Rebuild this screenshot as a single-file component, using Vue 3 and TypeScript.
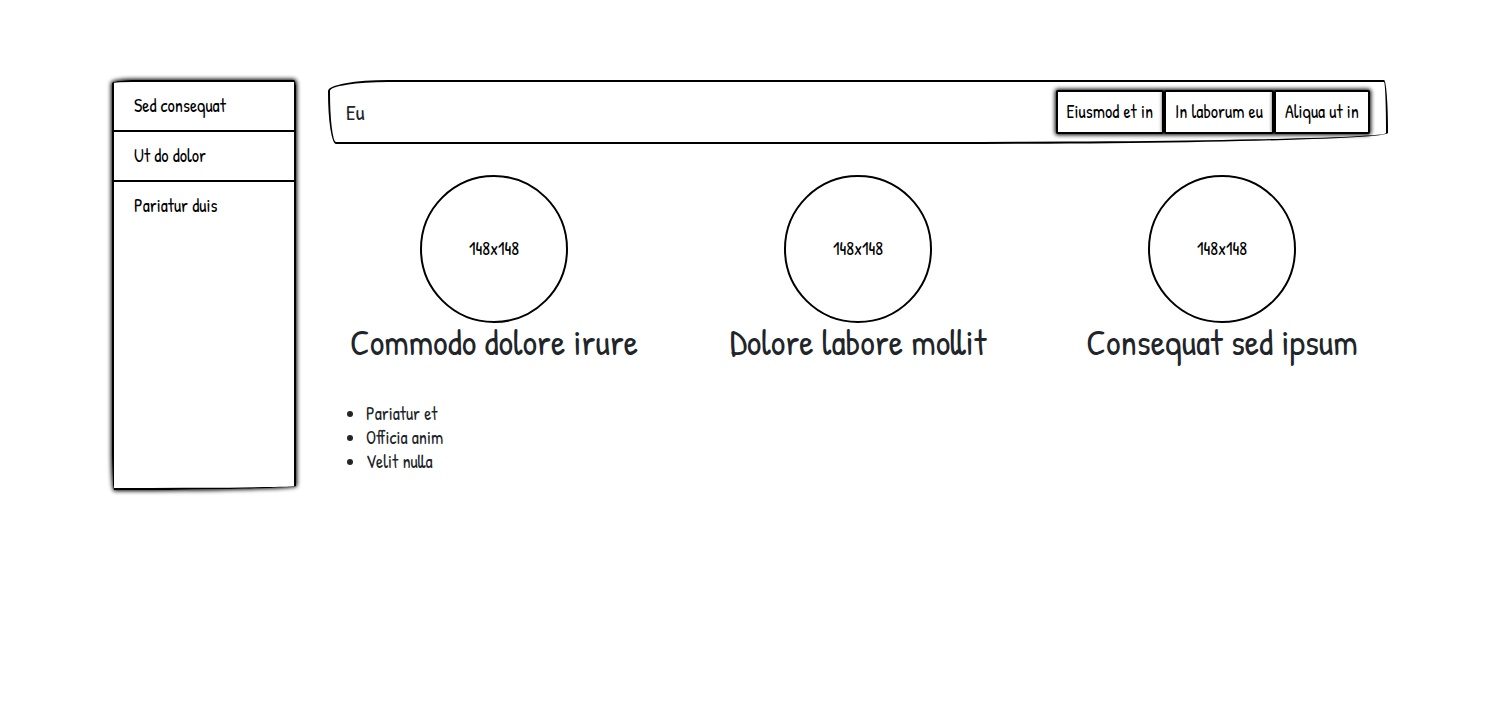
<script setup lang="ts">
const sections: string[] = ['Sed consequat', 'Ut do dolor', 'Pariatur duis']
const actions: string[] = ['Eiusmod et in', 'In laborum eu', 'Aliqua ut in']
const cards: string[] = ['Commodo dolore irure', 'Dolore labore mollit', 'Consequat sed ipsum']
const points: string[] = ['Pariatur et', 'Officia anim', 'Velit nulla']
</script>

<template>
  <div class="page">
    <aside class="sidebar">
      <a v-for="s in sections" :key="s" href="#" class="side-link">{{ s }}</a>
    </aside>
    <main class="main">
      <nav class="navbar">
        <a href="#" class="brand">Eu</a>
        <div class="actions">
          <button v-for="a in actions" :key="a" type="button">{{ a }}</button>
        </div>
      </nav>
      <section class="cards">
        <article v-for="c in cards" :key="c" class="card">
          <div class="circle">148x148</div>
          <h2>{{ c }}</h2>
        </article>
      </section>
      <ul class="points">
        <li v-for="p in points" :key="p">{{ p }}</li>
      </ul>
    </main>
  </div>
</template>

<style>
body {
  margin: 0;
  background: #fff;
}
</style>

<style scoped>
.page {
  display: grid;
  grid-template-columns: 184px 1fr;
  gap: 32px;
  padding: 80px 112px;
  font: 18px/24px "Patrick Hand", "Indie Flower", Lato, sans-serif;
  color: #212529;
}
.sidebar {
  display: flex;
  flex-direction: column;
  box-sizing: border-box;
  min-height: 410px;
  overflow: hidden;
  border: 2px solid #000;
  border-radius: 20px 2px 180px 2px / 3px 6px 4px 40px;
  box-shadow: 0 0 4px 1px #000;
}
.side-link {
  padding: 12px 20px;
  color: #000;
  text-decoration: none;
}
.side-link + .side-link {
  border-top: 2px solid #000;
}
.main {
  min-width: 0;
}
.navbar {
  display: flex;
  align-items: center;
  justify-content: space-between;
  padding: 8px 16px;
  border: 2px solid #000;
  border-radius: 60px 4px 450px 8px / 11px 52px 11px 52px;
}
.brand {
  font-size: 22px;
  color: #212529;
  text-decoration: none;
}
.actions {
  display: flex;
}
.actions button {
  padding: 8px 9px;
  border: 2px solid #000;
  border-radius: 2px;
  background: #fff;
  box-shadow: 0 0 4px 1px #000;
  font: inherit;
  color: #000;
}
.cards {
  display: grid;
  grid-template-columns: repeat(3, 1fr);
  margin: 31px -16px 0;
}
.card {
  display: flex;
  flex-direction: column;
  align-items: center;
}
.circle {
  display: flex;
  align-items: center;
  justify-content: center;
  box-sizing: border-box;
  width: 148px;
  height: 148px;
  border: 2px solid #000;
  border-radius: 50%;
  color: #000;
}
h2 {
  margin: 0;
  font-size: 36px;
  font-weight: 400;
  line-height: 38px;
}
.points {
  margin: 41px 0 0;
  padding: 0 0 0 38px;
}
</style>
